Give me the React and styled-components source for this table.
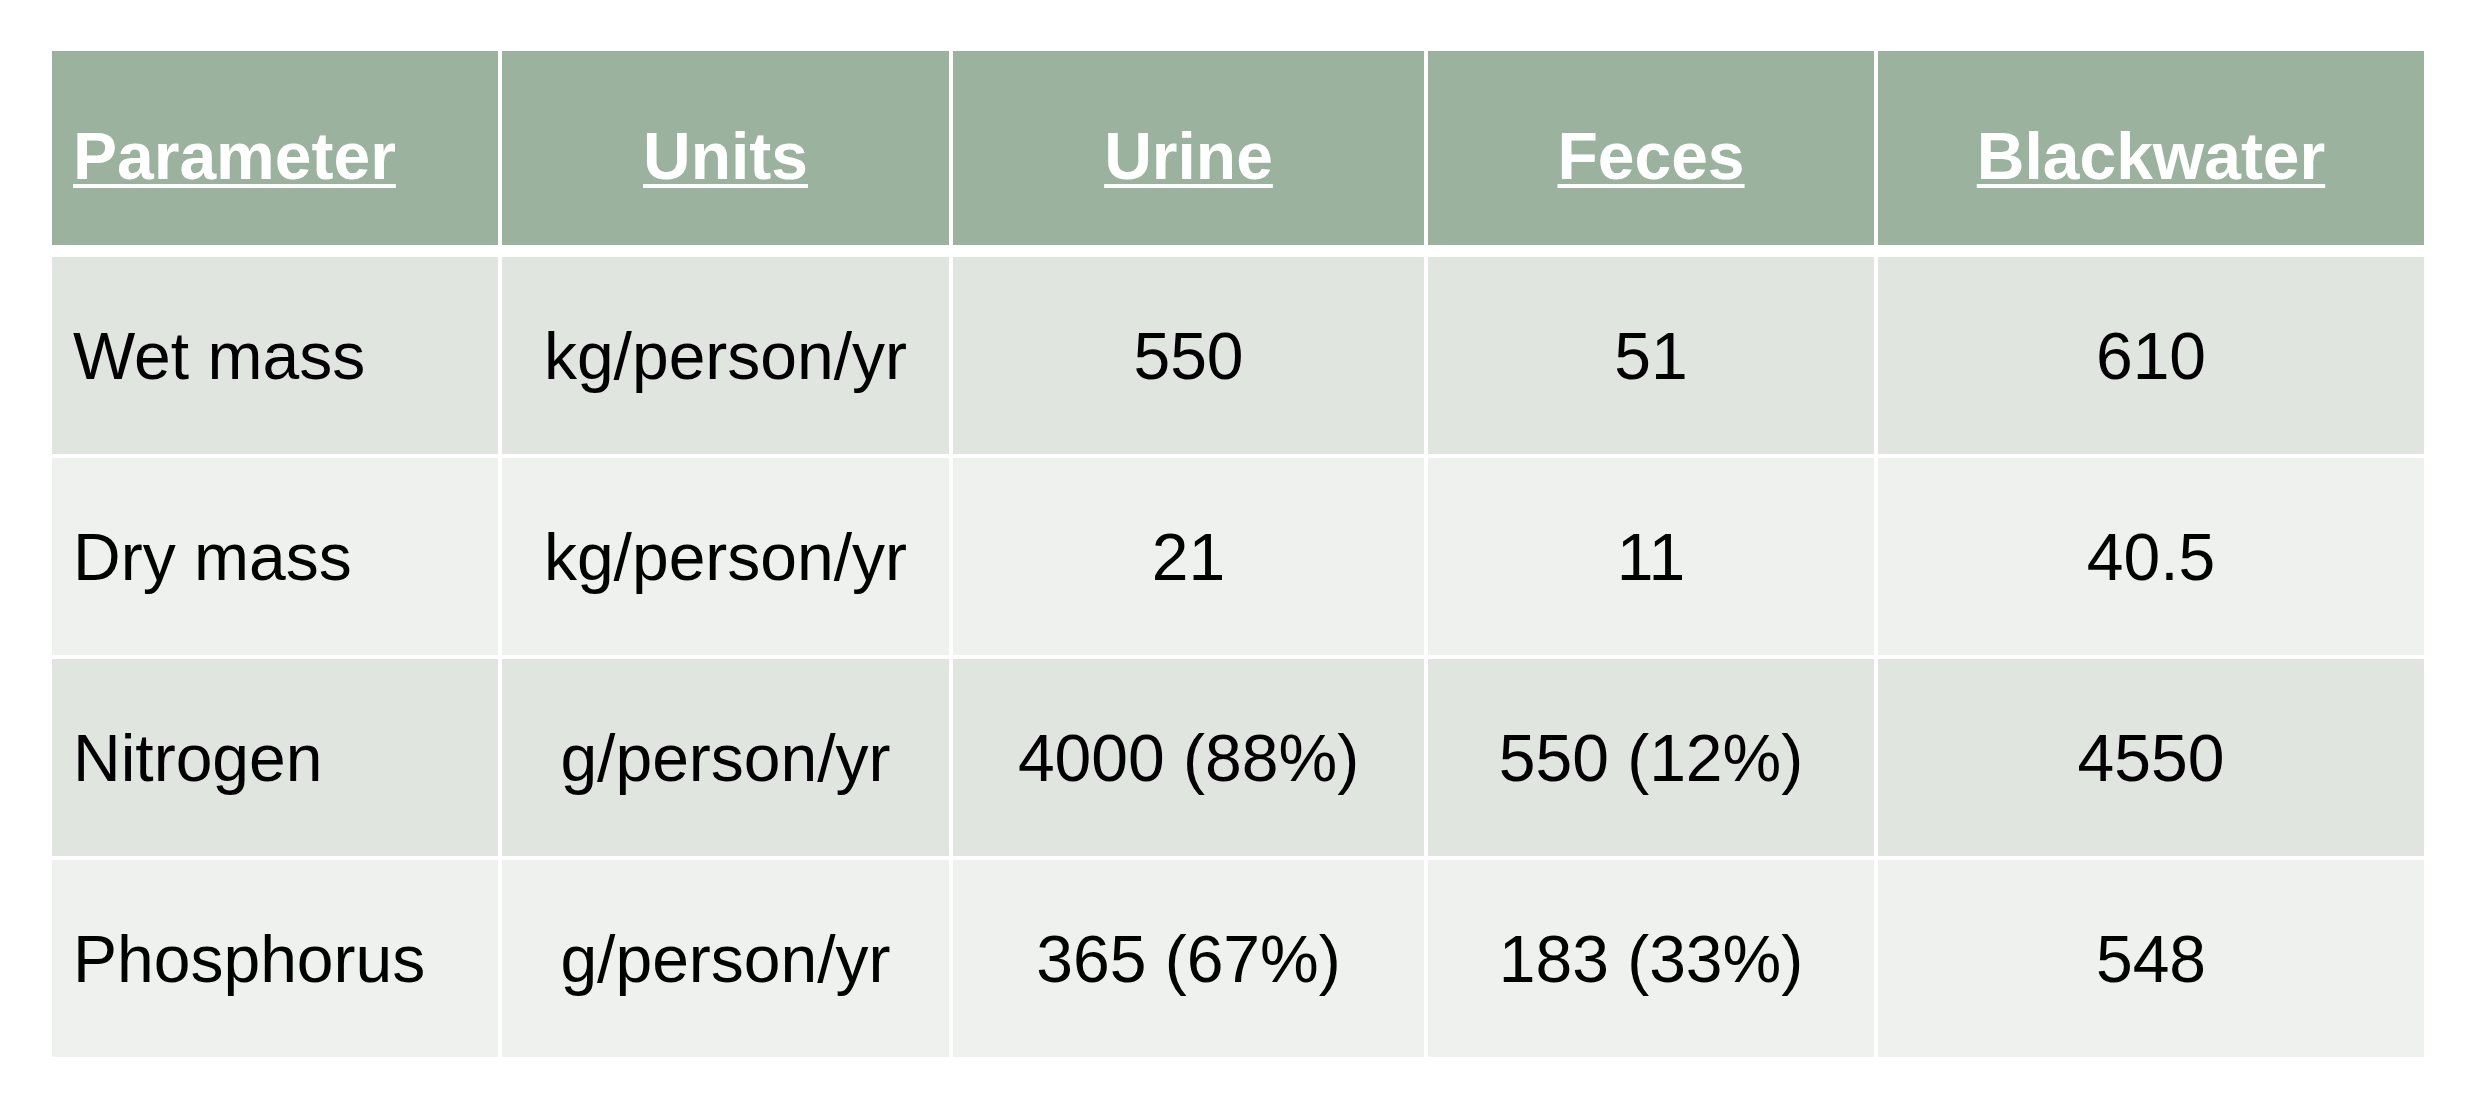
import React from 'react';
import styled, { createGlobalStyle } from 'styled-components';

const GlobalStyle = createGlobalStyle`
  html, body {
    margin: 0;
    padding: 0;
    background: #ffffff;
  }
  body {
    font-family: "Liberation Sans", Arial, sans-serif;
  }
`;

const Page = styled.div`
  padding: 51px 0 0 52px;
  width: 2475px;
  height: 1108px;
  box-sizing: border-box;
`;

const Table = styled.div`
  display: flex;
  flex-direction: column;
  gap: 4px;
  width: 2372px;
`;

const Row = styled.div`
  display: grid;
  grid-template-columns: 446px 447px 471px 446px 546px;
  column-gap: 4px;
  height: ${p => (p.$head ? 194 : 197)}px;
  margin-bottom: ${p => (p.$head ? 8 : 0)}px;
`;

const Cell = styled.div`
  display: flex;
  align-items: center;
  justify-content: ${p => (p.$left ? 'flex-start' : 'center')};
  padding: 0 0 0 ${p => (p.$left ? 21 : 0)}px;
  box-sizing: border-box;
  background: ${p => p.$bg};
  font-size: 66px;
  color: #000000;
  white-space: nowrap;
`;

const HeadCell = styled(Cell)`
  padding-top: 16px;
  background: #9bb39e;
  color: #ffffff;
  font-weight: 700;
  span {
    text-decoration: underline;
    text-decoration-thickness: 4px;
    text-underline-offset: 5px;
  }
`;

const headers = ['Parameter', 'Units', 'Urine', 'Feces', 'Blackwater'];

const rows = [
  ['Wet mass', 'kg/person/yr', '550', '51', '610'],
  ['Dry mass', 'kg/person/yr', '21', '11', '40.5'],
  ['Nitrogen', 'g/person/yr', '4000 (88%)', '550 (12%)', '4550'],
  ['Phosphorus', 'g/person/yr', '365 (67%)', '183 (33%)', '548'],
];

export default function App() {
  return (
    <>
      <GlobalStyle />
      <Page>
        <Table>
          <Row $head>
            {headers.map((h, i) => (
              <HeadCell key={h} $left={i === 0}>
                <span>{h}</span>
              </HeadCell>
            ))}
          </Row>
          {rows.map((r, ri) => (
            <Row key={r[0]}>
              {r.map((v, ci) => (
                <Cell key={ci} $left={ci === 0} $bg={ri % 2 === 0 ? '#e0e5e0' : '#eff1ef'}>
                  {v}
                </Cell>
              ))}
            </Row>
          ))}
        </Table>
      </Page>
    </>
  );
}
